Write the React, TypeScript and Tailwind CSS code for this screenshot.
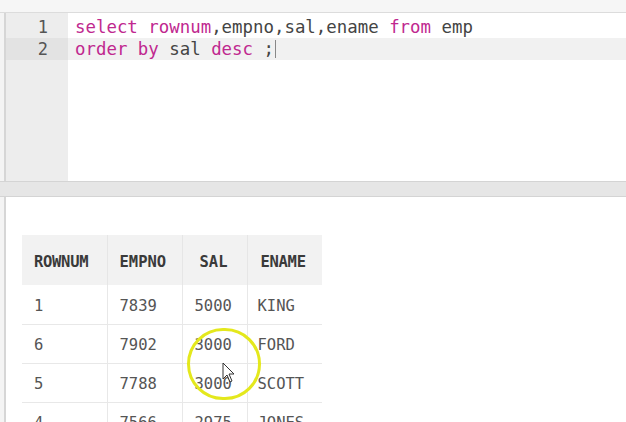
const rows = [
  ["1", "7839", "5000", "KING"],
  ["6", "7902", "3000", "FORD"],
  ["5", "7788", "3000", "SCOTT"],
  ["4", "7566", "2975", "JONES"],
];

const kw = "text-[#c0288f]";

export default function App() {
  return (
    <div className="w-[626px] h-[422px] overflow-hidden bg-[#f4f4f4] flex flex-col relative font-['DejaVu_Sans_Mono',monospace]">
      <div className="h-[13px] shrink-0 bg-[#f6f6f6] border-b border-[#dcdcdc]" />
      <div className="h-[168px] shrink-0 flex ml-[4px] border-l-2 border-[#d6d6d6] bg-white">
        <div className="w-[62px] bg-[#ededed] pt-[3px] text-[17px] text-[#555] leading-[22px]">
          <div className="pr-[20px] text-right">1</div>
          <div className="pr-[20px] text-right bg-[#e3e3e3]">2</div>
        </div>
        <div className="flex-1 pt-[3px] text-[17.4px] leading-[22px] text-[#444] whitespace-pre">
          <div className="pl-[7px]">
            <span className={kw}>select rownum</span>,empno,sal,ename <span className={kw}>from</span> emp
          </div>
          <div className="pl-[7px] bg-[#f1f1f1] flex items-center">
            <span className={kw}>order by</span> sal <span className={kw}>desc</span> ;
            <span className="inline-block w-[1px] h-[18px] bg-[#888] ml-[1px]" />
          </div>
        </div>
      </div>
      <div className="h-[16px] shrink-0 bg-[#e6e6e6] border-y border-[#d4d4d4]" />
      <div className="flex-1 ml-[4px] border-l-2 border-[#d6d6d6] bg-white pt-[38px] pl-[16px]">
        <table className="border-collapse text-[15.5px]">
          <thead>
            <tr className="bg-[#f2f2f2] h-[50px] text-[#3a3a3a] font-bold text-[15.5px]">
              <th className="w-[85px] pl-[12px] pt-[5px] text-left border-r border-[#e6e6e6] tracking-[-0.3px]">ROWNUM</th>
              <th className="w-[75px] pl-[12px] pt-[5px] text-left border-r border-[#e6e6e6]">EMPNO</th>
              <th className="w-[65px] pl-[17px] pt-[5px] text-left border-r border-[#e6e6e6]">SAL</th>
              <th className="w-[75px] pl-[13px] pt-[5px] text-left tracking-[-0.3px]">ENAME</th>
            </tr>
          </thead>
          <tbody className="text-[#555]">
            {rows.map((r) => (
              <tr key={r[0]} className="h-[39px] border-b border-[#e8e8e8]">
                <td className="pl-[12px] pt-[4px] border-r border-[#e8e8e8]">{r[0]}</td>
                <td className="pl-[12px] pt-[4px] border-r border-[#e8e8e8]">{r[1]}</td>
                <td className="pl-[12px] pt-[4px] border-r border-[#e8e8e8]">{r[2]}</td>
                <td className="pl-[10px] pt-[4px]">{r[3]}</td>
              </tr>
            ))}
          </tbody>
        </table>
      </div>
      <div className="absolute left-[187px] top-[328px] w-[74px] h-[72px] rounded-full border-[3px] border-[#e4e81c]" />
      <svg className="absolute left-[222px] top-[362px]" width="14" height="22" viewBox="0 0 14 22">
        <path d="M1 1 L1 17 L5 13 L8 20 L10 19 L7 12 L12 12 Z" fill="white" stroke="#333" strokeWidth="1" />
      </svg>
    </div>
  );
}
